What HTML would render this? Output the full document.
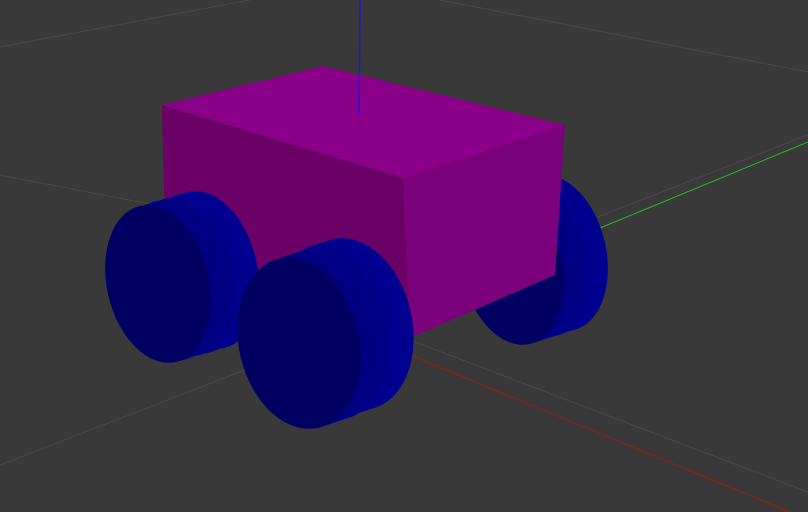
<!DOCTYPE html>
<html><head><style>html,body{margin:0;padding:0;background:#393939;}svg{display:block}</style></head>
<body>
<svg width="808" height="512" viewBox="0 0 808 512" xmlns="http://www.w3.org/2000/svg">
<rect width="808" height="512" fill="#393939"/>
<g stroke="#474747" stroke-width="1" fill="none">
<line x1="0" y1="47" x2="250" y2="0"/>
<line x1="440" y1="0" x2="808" y2="72"/>
<line x1="0" y1="175" x2="170" y2="208"/>
<line x1="0" y1="465" x2="245" y2="370"/>
<line x1="410" y1="340" x2="808" y2="492"/>
<line x1="590" y1="220" x2="808" y2="135"/>
</g>
<line x1="410" y1="355" x2="790" y2="512" stroke="#a01818" stroke-width="1"/>
<line x1="600" y1="228" x2="808" y2="142" stroke="#22c022" stroke-width="1"/>
<!-- rear right wheel -->
<ellipse cx="556" cy="253" rx="50" ry="79" fill="#000090" transform="rotate(-13 556 253)"/>
<ellipse cx="549" cy="255" rx="50" ry="79" fill="#00008e" transform="rotate(-13 549 255)"/>
<ellipse cx="541" cy="258" rx="50" ry="79" fill="#00008a" transform="rotate(-13 541 258)"/>
<ellipse cx="534" cy="260" rx="50" ry="79" fill="#000087" transform="rotate(-13 534 260)"/>
<ellipse cx="527" cy="262" rx="50" ry="79" fill="#000084" transform="rotate(-13 527 262)"/>
<ellipse cx="519" cy="265" rx="50" ry="79" fill="#000080" transform="rotate(-13 519 265)"/>
<ellipse cx="512" cy="267" rx="50" ry="79" fill="#000062" transform="rotate(-13 512 267)"/>
<!-- box -->
<polygon points="162,105 403,178 410,340 165,230" fill="#6b0066"/>
<polygon points="403,178 565,125 555,275 410,338" fill="#7b007b"/>
<polygon points="162,105 323,66 565,125 403,178" fill="#8b0089"/>
<line x1="360" y1="0" x2="359" y2="113" stroke="#1818e0" stroke-width="1.5"/>
<!-- left wheel -->
<ellipse cx="206" cy="270" rx="51" ry="80" fill="#000090" transform="rotate(-13 206 270)"/>
<ellipse cx="198" cy="272" rx="51" ry="80" fill="#00008e" transform="rotate(-13 198 272)"/>
<ellipse cx="190" cy="275" rx="51" ry="80" fill="#00008a" transform="rotate(-13 190 275)"/>
<ellipse cx="182" cy="277" rx="51" ry="80" fill="#000087" transform="rotate(-13 182 277)"/>
<ellipse cx="174" cy="279" rx="51" ry="80" fill="#000084" transform="rotate(-13 174 279)"/>
<ellipse cx="166" cy="282" rx="51" ry="80" fill="#000080" transform="rotate(-13 166 282)"/>
<ellipse cx="158" cy="284" rx="51" ry="80" fill="#000062" transform="rotate(-13 158 284)"/>
<!-- front wheel -->
<ellipse cx="352" cy="324" rx="60" ry="87" fill="#000090" transform="rotate(-13 352 324)"/>
<ellipse cx="343" cy="327" rx="60" ry="87" fill="#00008e" transform="rotate(-13 343 327)"/>
<ellipse cx="334" cy="330" rx="60" ry="87" fill="#00008a" transform="rotate(-13 334 330)"/>
<ellipse cx="326" cy="334" rx="60" ry="87" fill="#000087" transform="rotate(-13 326 334)"/>
<ellipse cx="317" cy="337" rx="60" ry="87" fill="#000084" transform="rotate(-13 317 337)"/>
<ellipse cx="308" cy="340" rx="60" ry="87" fill="#000080" transform="rotate(-13 308 340)"/>
<ellipse cx="299" cy="343" rx="60" ry="87" fill="#000062" transform="rotate(-13 299 343)"/>
</svg>
</body></html>
